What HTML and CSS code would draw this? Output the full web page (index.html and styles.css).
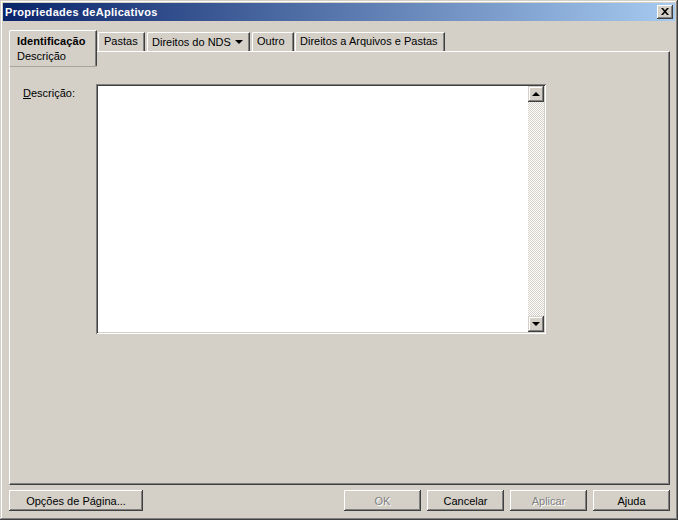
FILE: index.html
```html
<!DOCTYPE html>
<html lang="pt">
<head>
  <meta charset="UTF-8" />
  <title>Propriedades deAplicativos</title>
  <link rel="stylesheet" href="styles.css">
</head>
<body>
  <div class="window">
    <div class="titlebar">
      <span class="title">Propriedades deAplicativos</span>
      <div class="close">
        <svg width="8" height="7" viewBox="0 0 8 7"><path d="M0 0h2l2 2.2L6 0h2L5 3.5 8 7H6L4 4.8 2 7H0l3-3.5z" fill="#000"/></svg>
      </div>
    </div>

    <div class="content">
      <div class="tabs">
        <div class="tab active">
          <b>Identificação</b>
          <span>Descrição</span>
        </div>
        <div class="tab t-pastas">Pastas</div>
        <div class="tab t-nds">Direitos do NDS <span class="tab-arrow"></span></div>
        <div class="tab t-outro">Outro</div>
        <div class="tab t-arq">Direitos a Arquivos e Pastas</div>
      </div>

      <div class="panel">
        <div class="field">
          <label class="field-label"><u>D</u>escrição:</label>
          <div class="textbox">
            <div class="text-area"></div>
            <div class="scrollbar">
              <div class="scroll-btn"><span class="arrow-up"></span></div>
              <div class="scroll-track"></div>
              <div class="scroll-btn"><span class="arrow-down"></span></div>
            </div>
          </div>
        </div>
      </div>

      <div class="buttons">
        <div class="btn btn-wide">Opções de Pá<u>g</u>ina...</div>
        <div class="btn-group">
          <div class="btn disabled">OK</div>
          <div class="btn">Cancelar</div>
          <div class="btn disabled">Aplicar</div>
          <div class="btn">Ajuda</div>
        </div>
      </div>
    </div>
  </div>
</body>
</html>
```

FILE: styles.css
```css
body {
  margin: 0;
  background: #d4d0c8;
  font-family: "Liberation Sans", Arial, sans-serif;
  font-size: 11px;
  color: #000;
}
.window {
  width: 678px;
  height: 520px;
  box-sizing: border-box;
  padding: 3px;
  background: #d4d0c8;
  box-shadow: inset -1px -1px #404040, inset 1px 1px #d4d0c8, inset -2px -2px #808080, inset 2px 2px #fff;
  display: flex;
  flex-direction: column;
}
.titlebar {
  height: 18px;
  display: flex;
  align-items: center;
  justify-content: space-between;
  background: linear-gradient(to right, #0a246a, #a6caf0);
  padding: 0 2px 0 2px;
}
.title {
  color: #fff;
  font-weight: bold;
  font-size: 11px;
  letter-spacing: 0.3px;
}
.close {
  width: 16px;
  height: 14px;
  box-sizing: border-box;
  background: #d4d0c8;
  box-shadow: inset -1px -1px #404040, inset 1px 1px #fff, inset -2px -2px #808080;
  display: flex;
  align-items: center;
  justify-content: center;
  padding-bottom: 1px;
}
.content {
  flex: 1;
  padding: 9px 5px 0 6px;
  display: flex;
  flex-direction: column;
}
.tabs {
  height: 21px;
  display: flex;
  align-items: flex-end;
}
.tab {
  height: 19px;
  box-sizing: border-box;
  border-top: 1px solid #fff;
  border-left: 1px solid #fff;
  border-right: 1px solid #404040;
  box-shadow: inset -1px 0 #808080;
  line-height: 17px;
  padding-left: 4px;
  white-space: nowrap;
  border-top-left-radius: 2px;
}
.tab.active {
  align-self: flex-start;
  height: 37px;
  width: 88px;
  margin-bottom: -16px;
  position: relative;
  z-index: 1;
  background: #d4d0c8;
  padding: 3px 0 0 7px;
  line-height: 15px;
  border-bottom: 1px solid #a8a49c;
  border-bottom-right-radius: 2px;
}
.tab.active b {
  display: block;
  letter-spacing: 0.1px;
}
.tab.active span {
  display: block;
}
.t-pastas {
  margin-left: 1px;
  width: 47px;
  padding-left: 5px;
}
.t-nds {
  margin-left: 2px;
  width: 103px;
  display: flex;
  align-items: center;
}
.tab-arrow {
  margin-left: 4px;
  width: 0;
  height: 0;
  border-left: 4px solid transparent;
  border-right: 4px solid transparent;
  border-top: 4px solid #000;
}
.t-outro {
  margin-left: 2px;
  width: 42px;
}
.t-arq {
  margin-left: 1px;
  width: 150px;
}
.panel {
  height: 434px;
  box-sizing: border-box;
  border-top: 1px solid #fff;
  border-left: 1px solid #fff;
  border-right: 1px solid #404040;
  border-bottom: 1px solid #404040;
  box-shadow: inset -1px -1px #808080;
  padding: 32px 0 0 13px;
}
.field {
  display: grid;
  grid-template-columns: 73px 450px;
}
.field-label {
  padding-top: 3px;
}
.textbox {
  height: 250px;
  box-sizing: border-box;
  background: #fff;
  box-shadow: inset 1px 1px #808080, inset -1px -1px #fff, inset 2px 2px #404040, inset -2px -2px #d4d0c8;
  padding: 2px;
  display: flex;
}
.text-area {
  flex: 1;
}
.scrollbar {
  width: 16px;
  display: flex;
  flex-direction: column;
}
.scroll-track {
  flex: 1;
  background: repeating-conic-gradient(#fff 0 25%, #d4d0c8 0 50%) 0 0 / 2px 2px;
}
.scroll-btn {
  height: 16px;
  box-sizing: border-box;
  background: #d4d0c8;
  box-shadow: inset -1px -1px #404040, inset 1px 1px #d4d0c8, inset -2px -2px #808080, inset 2px 2px #fff;
  display: flex;
  align-items: center;
  justify-content: center;
}
.arrow-up {
  width: 0;
  height: 0;
  border-left: 4px solid transparent;
  border-right: 4px solid transparent;
  border-bottom: 4px solid #000;
  margin-top: -1px;
}
.arrow-down {
  width: 0;
  height: 0;
  border-left: 4px solid transparent;
  border-right: 4px solid transparent;
  border-top: 4px solid #000;
}
.buttons {
  margin-top: 5px;
  display: flex;
  justify-content: space-between;
}
.btn-group {
  display: flex;
  gap: 6px;
}
.btn {
  width: 77px;
  height: 21px;
  box-sizing: border-box;
  background: #d4d0c8;
  box-shadow: inset -1px -1px #404040, inset 1px 1px #fff, inset -2px -2px #808080;
  display: flex;
  align-items: center;
  justify-content: center;
}
.btn-wide {
  width: 134px;
}
.btn.disabled {
  color: #808080;
  text-shadow: 1px 1px #fff;
}
u {
  text-decoration: underline;
}
```
